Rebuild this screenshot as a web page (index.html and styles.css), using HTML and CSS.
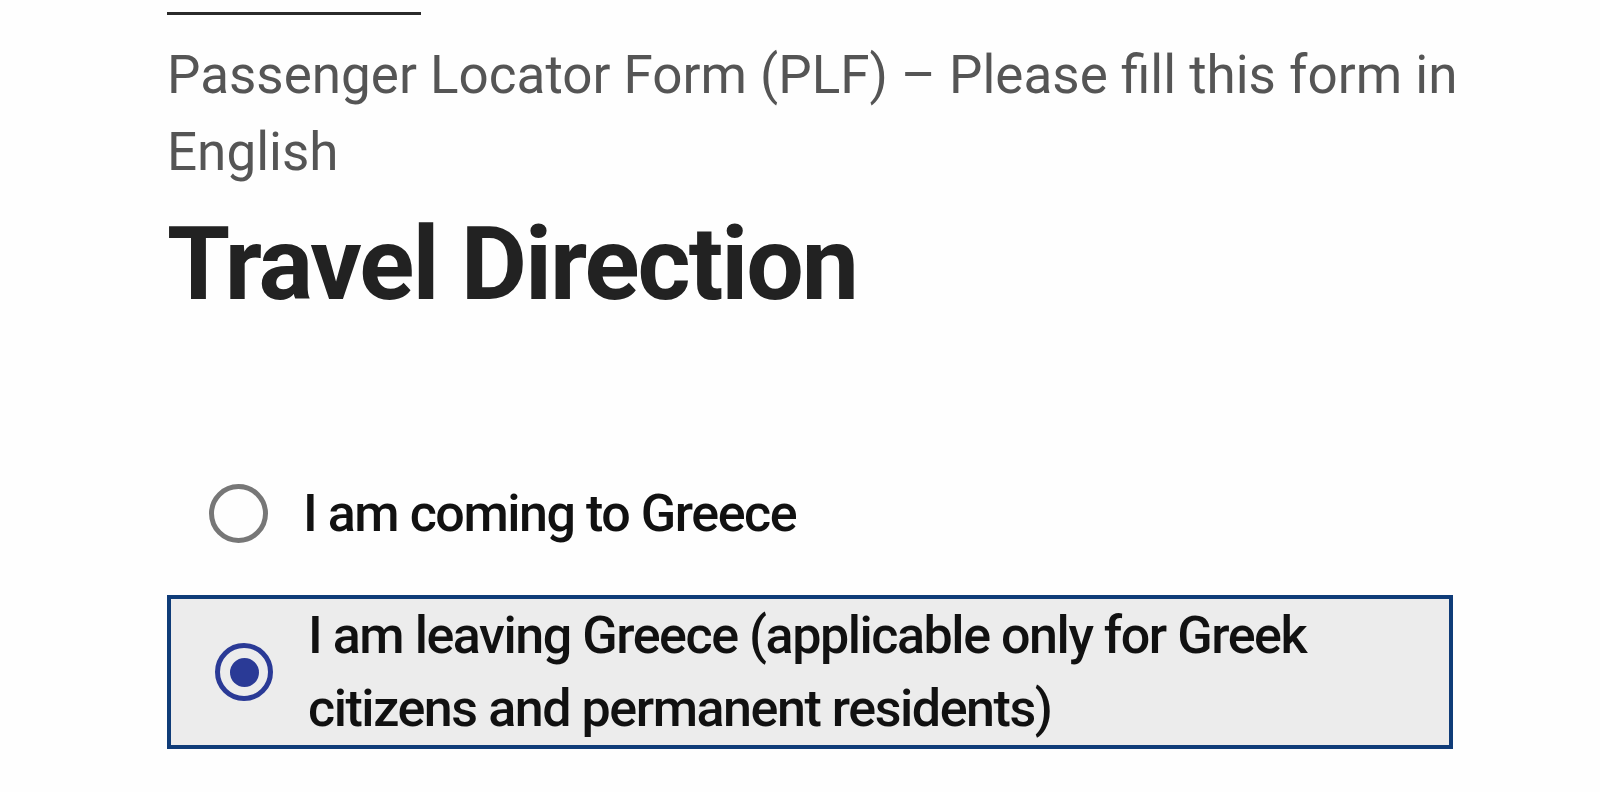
FILE: index.html
```html
<!DOCTYPE html>
<html>
	<head>
		<meta charset="UTF-8">
		<title>Travel Direction</title>
		<link rel="stylesheet" href="styles.css">
	</head>
	<body>
		<div class="page">
			<div class="rule"></div>
			<p class="intro">Passenger Locator Form (PLF) – Please fill this form in English</p>
			<h1 class="title">Travel Direction</h1>
			<div class="choices">
				<label class="choice">
					<span class="radio"></span>
					<span class="choice-text">I am coming to Greece</span>
				</label>
				<label class="choice selected">
					<span class="radio checked"></span>
					<span class="choice-text">I am leaving Greece (applicable only for Greek citizens and permanent residents)</span>
				</label>
			</div>
		</div>
	</body>
</html>
```

FILE: styles.css
```css
*{
	margin:0px;
	padding:0px;
	box-sizing:border-box;
}
body{
	background:#fefefe;
	font-family:Roboto, "Liberation Sans", sans-serif;
}
.page{
	padding-left:167px;
	width:1480px;
}
.rule{
	width:254px;
	height:3px;
	background:#2a2a2a;
	margin-top:12px;
}
.intro{
	margin-top:22px;
	font-size:53px;
	line-height:77px;
	color:#555;
}
.title{
	margin-top:12px;
	font-size:102px;
	line-height:122px;
	font-weight:700;
	letter-spacing:-2px;
	color:#222;
}
.choices{
	margin-top:150px;
}
.choice{
	display:flex;
	align-items:center;
	padding-left:42px;
	font-size:52px;
	font-weight:500;
	letter-spacing:-1.45px;
	line-height:77px;
	color:#111;
}
.radio{
	flex:none;
	width:59px;
	height:59px;
	border:5px solid #777;
	border-radius:50%;
	margin-right:35px;
	display:flex;
	align-items:center;
	justify-content:center;
}
.selected{
	margin-top:43px;
	width:1286px;
	padding-left:44px;
	border:4px solid #0f3c78;
	background:#ececec;
	line-height:73px;
}
.checked{
	border-color:#2a3a96;
	border-width:5px;
	width:58px;
	height:58px;
}
.checked::after{
	content:"";
	width:29px;
	height:29px;
	border-radius:50%;
	background:#2a3a96;
}
```
